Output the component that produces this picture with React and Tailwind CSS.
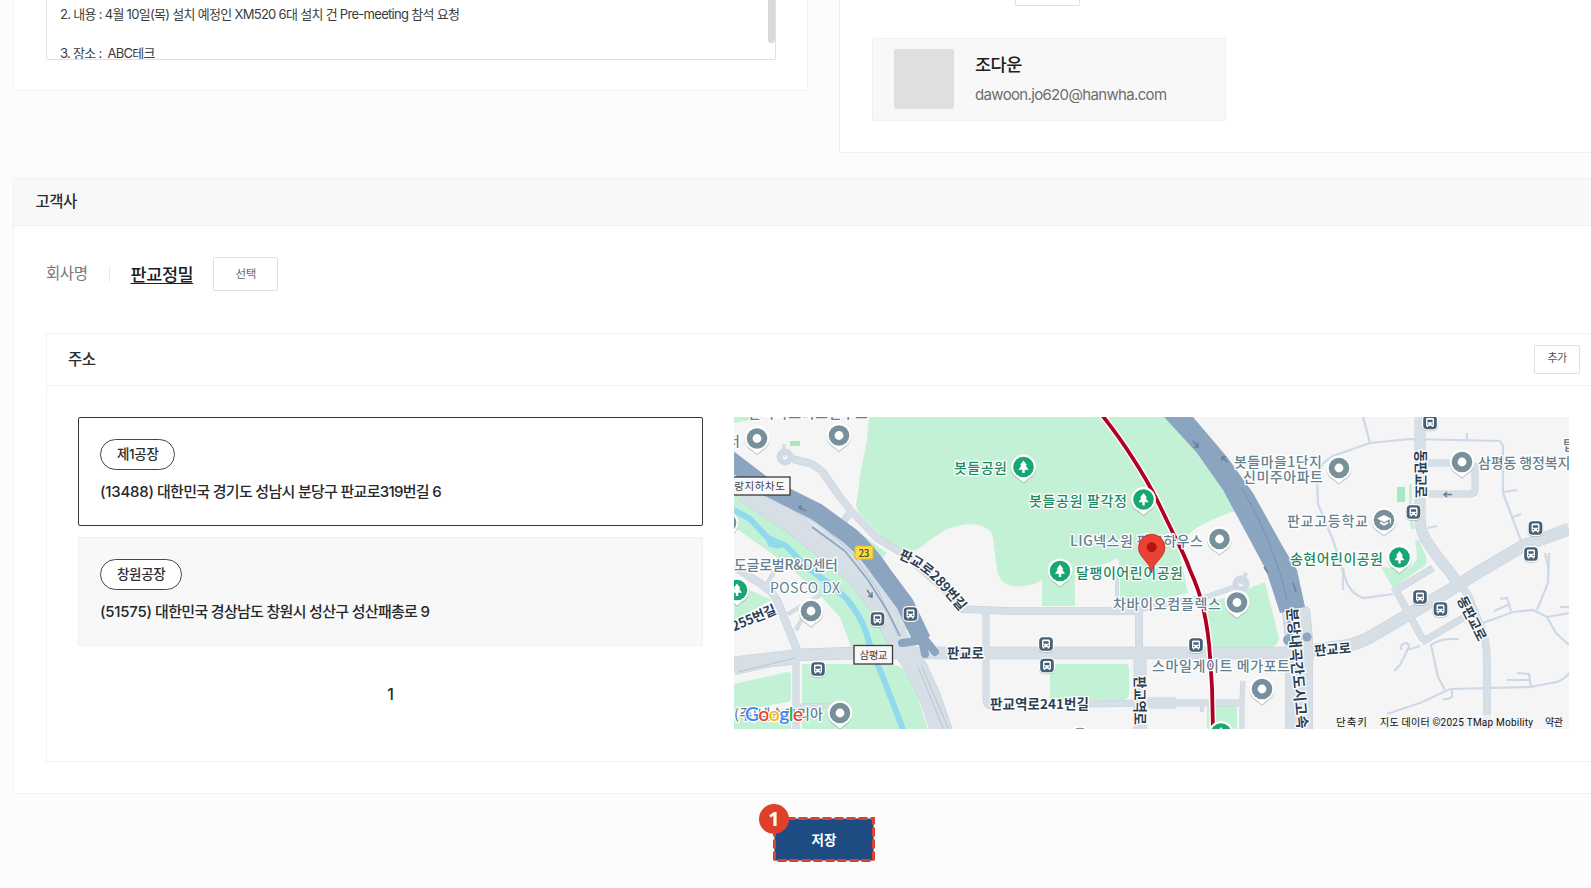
import React from "react";

const PARK = "#1b8a63";
const POI = "#66808f";
const ROAD = "#2c4054";

const thinRoads = [
  "M1363 417L1370 443",
  "M1343 590L1343 572L1333 540L1318 504L1317 477L1323 463L1333 456L1370 443L1410 439L1500 441L1503 446L1503 493L1521 541",
  "M1343 568Q1346 592 1363 598L1393 594",
  "M1467 441V433",
  "M1503 492L1517 490",
  "M1511 518L1521 514",
  "M1428 528L1437 526",
  "M1545 553L1549 570",
  "M1483 623L1513 612L1533 610L1547 617L1569 613",
  "M1547 617L1556 633L1569 645",
  "M1537 610L1548 583L1549 553",
  "M1500 599L1507 598L1511 611",
  "M1494 611L1510 604",
  "M1560 607L1569 607",
  "M1401 650Q1400 643 1407 643Q1411 646 1407 650L1420 646",
  "M1408 649L1400 665L1394 671",
  "M1459 639Q1440 638 1431 645L1438 677L1445 690",
  "M1387 714L1420 703L1450 689L1530 687L1557 682Q1566 678 1569 673",
  "M1507 680H1530",
  "M1517 673L1529 674L1531 687",
  "M1452 690V697Q1448 700 1443 699",
];

const roads = [
  ["M734 566L750 577Q770 588 777 600L797 650", 7],
  ["M766 585L774 572M788 614L820 595M796 630L803 617", 3],
  ["M796 650V730", 6],
  ["M798 706L850 705", 4],
  ["M784 457V444", 2],
  ["M793 459L812 464L822 471L840 497L852 512L877 538L905 555L945 590L962 609L1010 611H1137", 6.5],
  ["M850 512L841 526", 6],
  ["M1137 610L1180 601L1203 598L1238 586", 4.5],
  ["M1241 584L1246 573", 3],
  ["M986 612V698Q986 706 993 706", 6],
  ["M1117 612V572", 3],
  ["M1139 611V655", 7],
  ["M1140 655V730", 12],
  ["M1080 704L1148 703", 6],
  ["M1148 703L1176 703", 10],
  ["M1176 703L1243 703", 6],
  ["M1242 730V700L1243 681", 4],
  ["M1202 704V712", 3],
  ["M1428 463H1452M1475 463V489Q1475 494 1470 494H1428", 6],
  ["M1420 417V520Q1421 532 1426 540Q1436 556 1450 572L1458 584", 10],
  ["M1393 592L1433 568", 6],
  ["M1397 592L1423 640", 6],
  ["M1422 642L1468 615", 6],
  ["M1450 570L1468 595L1484 635Q1487 645 1487 665V730", 6.5],
  ["M734 669L795 655L855 653H1290L1345 646Q1360 643 1372 636L1450 590L1477 573L1523 546L1569 529", 11.5],
  ["M734 664L795 657", 14],
  ["M745 491L790 521L825 548L857 575L880 605L898 640L917 669L930 697L942 732", 21],
  ["M790 500L820 520L855 552L882 590L902 632", 12],
  ["M1305 607Q1311 630 1311 660", 4],
  ["M1296 610L1299 640V732", 27],
];

function Pin({ x, y, green, children }) {
  return (
    <g transform={`translate(${x} ${y})`}>
      <path d="M0 15.6L-5.2 11.2A12.4 12.4 0 1 1 5.2 11.2Z" fill="#8a949b" opacity=".5" transform="translate(0 1.2)" />
      <path d="M0 15.6L-5.2 11.2A12.4 12.4 0 1 1 5.2 11.2Z" fill="#fff" />
      <circle r="10.3" fill={green ? "#18a673" : "#78909c"} />
      {green ? (
        <path d="M0 -6.6L3.6 -1.8H2L5 2.8H1.2V6H-1.2V2.8H-5L-2 -1.8H-3.6Z" fill="#fff" />
      ) : (
        children || <circle r="4.4" fill="#fff" />
      )}
    </g>
  );
}

function Bus({ x, y }) {
  return (
    <g transform={`translate(${x} ${y})`}>
      <rect x="-8" y="-7.2" width="16" height="16" rx="5" fill="#8a949b" opacity=".55" />
      <rect x="-8" y="-8" width="16" height="16" rx="5" fill="#fff" />
      <rect x="-6.8" y="-6.8" width="13.6" height="13.6" rx="3.8" fill="#455f74" />
      <path
        d="M-4 -3.2Q-4 -4.6 -2.6 -4.6H2.6Q4 -4.6 4 -3.2V3.2H3.2V4.6H1.6V3.2H-1.6V4.6H-3.2V3.2H-4ZM-2.6 -2.8V-.2H2.6V-2.8Z"
        fill="#fff"
        fillRule="evenodd"
      />
      <circle cx="-2.2" cy="1.5" r=".8" fill="#455f74" />
      <circle cx="2.2" cy="1.5" r=".8" fill="#455f74" />
    </g>
  );
}

/* Label placed by its left edge and vertical middle, stretched to a known width. */
function Label({ x, y, w, color = POI, size = 14, weight = 500, rotate, children }) {
  return (
    <text
      x={x}
      y={y + size * 0.36}
      textLength={w}
      fontSize={size}
      fontWeight={weight}
      fill={color}
      stroke="#fff"
      strokeWidth="2.6"
      strokeLinejoin="round"
      paintOrder="stroke"
      transform={rotate ? `rotate(${rotate} ${x} ${y})` : undefined}
    >
      {children}
    </text>
  );
}

function BoxLabel({ x, y, w, h, tx, tw, children }) {
  return (
    <g>
      <rect x={x} y={y} width={w} height={h} fill="#f8f7fa" stroke="#3b3b3b" strokeWidth="1.3" />
      <text x={tx} y={y + h / 2 + 3.8} textLength={tw} fontSize="10.5" fill="#444">
        {children}
      </text>
    </g>
  );
}

function MapView() {
  return (
    <svg
      viewBox="734 417 835 312"
      className="block h-[312px] w-[835px] shrink-0 bg-[#f5f5f5] font-['Noto_Sans_CJK_KR',sans-serif]"
    >
      <g fill="#c3f1d5">
        <path d="M869 417L867 440L861 470L856 506L860 514L885 540L900 552Q912 552 920 548Q932 538 945 530Q965 522 978 525Q990 527 993 537L997 570Q1000 584 1012 586Q1030 588 1042 580V606H1075V566L1100 566L1118 558L1120 568V600L1140 605Q1150 602 1188 593L1183 570L1178 548L1190 533Q1200 523 1235 511L1223 490L1197 453L1164 417Z" />
        <path d="M850 524L873 543L887 553L880 560L862 546Z" />
        <path d="M734 484L760 498L800 530L838 558L870 603L890 638V652H853L840 617L817 592L785 563L734 527Z" />
        <path d="M802 664H893L910 672L928 730H802Z" />
        <path d="M734 684L788 672Q791 672 791 675V698Q791 701 788 702L734 712Z" />
        <path d="M734 718L791 708V730H734Z" />
        <path d="M734 583L772 600L734 620Z" />
        <path d="M734 417H765L734 423Z" />
        <path d="M1053 664H1125Q1129 664 1129 669V693Q1129 700 1122 700H1050V667Z" />
        <path d="M1207 706H1234Q1237 706 1237 709V730H1207Z" />
        <path d="M1203 604L1225 598L1265 582L1279 638Q1279 643 1273 647L1213 648Z" />
        <path d="M1415 539L1419 541L1427 558Q1427 566 1420 569L1393 588L1381 567L1407 569Q1418 562 1417 555Z" />
        <path d="M1409 484H1412V512H1409ZM1410 520H1413L1415 529H1411Z" />
      </g>
      <path d="M790 441H800V446H790ZM1397 487H1405V502H1397Z" fill="#a6e8bf" />

      <path
        d="M734 510L750 519L768 538L786 546L808 568L830 584L846 598Q860 615 866 632L872 652L882 675L904 732"
        fill="none"
        stroke="#90daee"
        strokeWidth="6"
      />
      <path d="M764 533L786 545L778 549L768 546Z" fill="#90daee" />

      <g fill="none" stroke="#cdd9e6" strokeWidth="2.2">
        {thinRoads.map((d) => (
          <path key={d} d={d} />
        ))}
      </g>
      <g fill="none" strokeLinejoin="round">
        {roads.map(([d, w]) => (
          <path key={d} d={d} stroke="#c6d1dc" strokeWidth={w + 1} />
        ))}
        {roads.map(([d, w]) => (
          <path key={d} d={d} stroke="#d6dee6" strokeWidth={w} />
        ))}
      </g>
      <circle cx="785" cy="457" r="5.5" fill="none" stroke="#d0dae4" strokeWidth="6" />
      <circle cx="1241" cy="584" r="5.5" fill="none" stroke="#d0dae4" strokeWidth="6" />
      <g fill="none" stroke="#b9c5d2" strokeWidth="1">
        <path d="M780 500L820 524L852 553L878 590L898 636" />
        <path d="M918 667L944 730M922 667L949 730" />
        <path d="M738 672L795 658" />
      </g>
      <path d="M812 527L845 551L868 580L888 612L900 636" fill="none" stroke="#8ba5c1" strokeWidth="1.6" />

      <g fill="none" stroke="#8ba5c1" strokeLinejoin="round">
        <path d="M725 456L763 485L817 512L850 536Q868 552 882 573L905 604L922 640" strokeWidth="18" />
        <path d="M922 636L935 652M924 640L902 643M922 640L925 654" strokeWidth="8" strokeLinecap="round" />
      </g>
      <path
        d="M1164 417H1193L1227 457L1253 493L1283 547L1297 570L1305 607L1280 613L1266 570L1250 540L1223 490L1197 453Z"
        fill="#8ba5c1"
      />
      <path d="M1243 490Q1275 545 1287 600" fill="none" stroke="#7893b2" strokeWidth="1" />
      <circle cx="1307" cy="637" r="4.5" fill="#8ba5c1" />
      <circle cx="1288" cy="640" r="5" fill="#8ba5c1" />
      <path d="M1290 606V640" stroke="#8ba5c1" strokeWidth="5" />

      <g fill="none" stroke="#667f99" strokeWidth="1.4">
        <path d="M806 511L799 507M802 506L799 507L801 510" />
        <path d="M867 590L872 597M868 596L872 597L872 592" />
        <path d="M1193 441L1198 447M1194 447L1198 447L1198 442" />
        <path d="M1227 462L1222 457M1226 457L1222 457L1222 461" />
        <path d="M1452 494.500H1444M1447 492L1444 494.500L1447 497" />
        <path d="M1264 567L1268 573M1296 592L1293 583" />
      </g>

      <g fill="none">
        <path
          d="M1102 415Q1120 438 1132 457Q1147 480 1157 500L1173 533Q1185 556 1190 570Q1199 590 1203 607Q1209 634 1210 657L1212 687L1213 730"
          stroke="#fff"
          strokeWidth="6.500"
        />
        <path
          d="M1102 415Q1120 438 1132 457Q1147 480 1157 500L1173 533Q1185 556 1190 570Q1199 590 1203 607Q1209 634 1210 657L1212 687L1213 730"
          stroke="#b00024"
          strokeWidth="3.800"
        />
      </g>

      <rect x="855" y="546" width="18" height="13" rx="1" fill="#fddc3f" stroke="#e0b92c" />
      <text x="858.500" y="556.500" textLength="11" fontSize="10" fontWeight="500" fill="#4b4a3a">
        23
      </text>

      <Label x={748} y={413} w={120}>한국파스퇴르연구소</Label>
      <Label x={727} y={441} w={13}>터</Label>
      <Label x={734} y={565} w={104}>도글로벌R&amp;D센터</Label>
      <Label x={770} y={588} w={70} weight={400}>POSCO DX</Label>
      <Label x={734} y={714} w={89}>(주)넥슨코리아</Label>
      <Label x={954} y={468} w={53} color={PARK}>봇들공원</Label>
      <Label x={1029} y={501} w={98} color={PARK}>봇들공원 팔각정</Label>
      <Label x={1070} y={540.5} w={133}>LIG넥스원 판교하우스</Label>
      <Label x={1076} y={573} w={107} color={PARK}>달팽이어린이공원</Label>
      <Label x={1113} y={604} w={108}>차바이오컴플렉스</Label>
      <Label x={1152} y={666} w={138}>스마일게이트 메가포트</Label>
      <Label x={1234} y={462} w={88}>봇들마을1단지</Label>
      <Label x={1243} y={476.5} w={80}>신미주아파트</Label>
      <Label x={1478} y={463} w={105}>삼평동 행정복지센</Label>
      <Label x={1563} y={445} w={13}>탑</Label>
      <Label x={1287} y={521} w={81}>판교고등학교</Label>
      <Label x={1290} y={559} w={93} color={PARK}>송현어린이공원</Label>

      <Label x={947} y={653} w={37} size={13.5} weight={700} color={ROAD}>판교로</Label>
      <Label x={1314} y={651} w={37} size={13.5} weight={700} color={ROAD} rotate={-5}>판교로</Label>
      <Label x={990} y={704} w={99} size={13.5} weight={700} color={ROAD}>판교역로241번길</Label>
      <Label x={1140} y={676} w={49} size={13.5} weight={700} color={ROAD} rotate={90}>판교역로</Label>
      <Label x={1421} y={450} w={48} size={13.5} weight={700} color={ROAD} rotate={90}>동판교로</Label>
      <Label x={1461} y={597} w={48} size={13.5} weight={700} color={ROAD} rotate={63}>동판교로</Label>
      <Label x={1292} y={608} w={121} size={14.5} weight={700} color={ROAD} rotate={85}>분당내곡간도시고속</Label>
      <Label x={732} y={627} w={47} size={13.5} weight={700} color={ROAD} rotate={-23}>255번길</Label>
      <path id="road289" d="M898 558Q924 569 939 587L964 616" fill="none" />
      <text
        fontSize="13.500"
        fontWeight="700"
        fill={ROAD}
        stroke="#fff"
        strokeWidth="2.600"
        strokeLinejoin="round"
        paintOrder="stroke"
      >
        <textPath href="#road289" textLength="83">판교로289번길</textPath>
      </text>

      <BoxLabel x={720} y={477} w={70} h={18} tx={724} tw={61}>사랑지하차도</BoxLabel>
      <BoxLabel x={854} y={645.5} w={38.5} h={18.5} tx={859.5} tw={28}>삼평교</BoxLabel>

      <Bus x={877.5} y={619} />
      <Bus x={910.5} y={614} />
      <Bus x={818} y={669} />
      <Bus x={1046} y={644} />
      <Bus x={1047} y={665.5} />
      <Bus x={1196} y={645} />
      <Bus x={1430} y={422.5} />
      <Bus x={1413.5} y={512} />
      <Bus x={1535.5} y={528} />
      <Bus x={1531} y={554} />
      <Bus x={1420} y={597} />
      <Bus x={1440.5} y={609} />

      <Pin x={757} y={438.5} />
      <Pin x={839} y={435.5} />
      <Pin x={726} y={523} />
      <Pin x={811} y={611} />
      <Pin x={840} y={713} />
      <Pin x={1219.5} y={539} />
      <Pin x={1237} y={602.5} />
      <Pin x={1262} y={689} />
      <Pin x={1339} y={468} />
      <Pin x={1462} y={462} />
      <Pin x={1080} y={738} />
      <Pin x={1384} y={520}>
        <path d="M-7 -1.500L0 -5L7 -1.500V3.500H5.800V-.7L0 2.200ZM-4 1.600L0 3.600L4 1.600V3.600L0 5.800L-4 3.600Z" fill="#fff" />
      </Pin>
      <Pin x={1023.5} y={467} green />
      <Pin x={1143.5} y={499.5} green />
      <Pin x={1060} y={571} green />
      <Pin x={737} y={590} green />
      <Pin x={1399.5} y={557.5} green />
      <Pin x={1221} y={733.5} green />

      <path
        d="M1151.700 573C1150.500 562 1138.500 558 1138.500 547.500A13.200 13.200 0 0 1 1164.900 547.500C1164.900 558 1153 562 1151.700 573Z"
        fill="#ea4335"
        stroke="#c5221f"
        strokeWidth=".8"
      />
      <circle cx="1151.700" cy="547.300" r="5" fill="#b31412" />

      <text
        x="745"
        y="721"
        textLength="58"
        fontSize="19.500"
        fontWeight="600"
        stroke="#fff"
        strokeWidth="2.200"
        paintOrder="stroke"
        className="font-['Lato','Open_Sans',sans-serif]"
      >
        <tspan fill="#4285f4">G</tspan>
        <tspan fill="#ea4335">o</tspan>
        <tspan fill="#fbbc04">o</tspan>
        <tspan fill="#4285f4">g</tspan>
        <tspan fill="#34a853">l</tspan>
        <tspan fill="#ea4335">e</tspan>
      </text>

      <rect x="1331" y="715" width="238" height="14" fill="#f5f5f5" opacity=".7" />
      <g fontSize="10" fill="#111" className="font-['Roboto','Noto_Sans_CJK_KR',sans-serif]">
        <text x="1336" y="725.500" textLength="31" fontSize="10.500">단축키</text>
        <text x="1380" y="725.500" textLength="153">지도 데이터 ©2025 TMap Mobility</text>
        <text x="1545" y="725.500" textLength="18">약관</text>
      </g>
    </svg>
  );
}

function AddressCard({ name, zip, address, selected }) {
  return (
    <div
      className={
        selected
          ? "flex h-[109px] flex-col items-start rounded-[2px] border border-[#33363a] bg-white px-[21px] pt-[21px]"
          : "flex h-[109px] flex-col items-start rounded-[2px] border border-[#f0f0f1] bg-[#f8f8f8] px-[21px] pt-[21px]"
      }
    >
      <span className="flex h-[31px] items-center rounded-full border border-[#44474b] bg-white px-4 pb-px text-[13.5px] font-medium tracking-[-0.35px] text-[#2c2e31]">
        {name}
      </span>
      <p className="mt-2.5 text-[15px] leading-6 font-medium tracking-[-0.7px] text-[#26282b]">
        <span className="tracking-[-0.25px]">({zip})</span> {address}
      </p>
    </div>
  );
}

export default function App() {
  return (
    <div className="h-[888px] w-[1591px] overflow-hidden bg-[#fcfcfc] font-['Inter','Noto_Sans_CJK_KR',sans-serif]">
      <div className="flex h-[153px] w-[1700px] items-start pl-[13px]">
        <section className="h-[91px] w-[795px] border border-t-0 border-[#f3f3f4] bg-white pl-8">
          <div className="flex h-[60px] w-[730px] justify-between overflow-hidden rounded-b-[2px] border border-t-0 border-[#dde0e6]">
            <div className="pt-[5px] pl-[13px] text-[13px] leading-[19.5px] tracking-[-0.7px] whitespace-pre text-[#3a3c40]">
              <p>2. 내용 : 4월 10일(목) 설치 예정인 XM520 6대 설치 건 Pre-meeting 참석 요청</p>
              <p>&nbsp;</p>
              <p>3. 장소 :&nbsp; ABC테크</p>
            </div>
            <span className="h-[43px] w-[7px] rounded-b-full bg-[#d9d9d9]" />
          </div>
        </section>

        <section className="ml-[31px] h-[153px] w-[860px] border border-t-0 border-[#f0f0f1] bg-white pl-8">
          <div className="ml-[143px] h-1.5 w-[65px] rounded-b-[2px] border border-t-0 border-[#dde0e6]" />
          <div className="mt-8 flex h-[83px] w-[354px] items-center rounded-[2px] border border-[#f0f0f1] bg-[#f8f8f8] pl-[21px]">
            <span className="mb-px size-[60px] rounded-[2px] bg-[#dedfe1]" />
            <div className="pt-px pl-[21px]">
              <p className="text-[17.5px] leading-7 font-medium tracking-[-0.5px] text-[#1e2023]">조다운</p>
              <p className="mt-0.5 text-[15px] leading-7 tracking-[-0.66px] text-[#6b6d70]">dawoon.jo620@hanwha.com</p>
            </div>
          </div>
        </section>
      </div>

      <section className="mt-[25px] ml-[13px] h-[616px] w-[1700px] border border-[#f2f2f3] bg-white">
        <header className="flex h-[47px] items-center border-b border-[#f0f0f1] bg-[#f8f8f8] pl-[21.5px] text-[15.5px] font-medium tracking-[-0.5px] text-[#2a2c2f]">
          고객사
        </header>

        <div className="mt-[31px] flex h-[34px] items-center pl-8">
          <span className="text-[15.5px] tracking-[-0.4px] text-[#77797c]">회사명</span>
          <span className="ml-[21px] h-4 w-px bg-[#e8e9eb]" />
          <span className="ml-[21px] pt-0.5 text-[17.5px] font-medium tracking-[-0.45px] text-[#1e2023] underline decoration-1 underline-offset-2">
            판교정밀
          </span>
          <span className="ml-5 flex h-[34px] w-[65px] items-center justify-center rounded-[2px] border border-[#dde0e6] pt-px text-[11.5px] tracking-[-0.3px] text-[#66686b]">
            선택
          </span>
        </div>

        <div className="mt-[42px] ml-8 h-[429px] w-[1600px] border border-[#f2f2f3]">
          <header className="flex h-[52px] items-center border-b border-[#f2f2f3] pl-[21px]">
            <h2 className="w-[1466px] text-[15.5px] font-medium tracking-[-0.5px] text-[#2a2c2f]">주소</h2>
            <span className="flex h-[29px] w-[46px] items-center justify-center rounded-[2px] border border-[#dde0e6] pb-0.5 text-[11px] tracking-[-0.5px] text-[#55575a]">
              추가
            </span>
          </header>

          <div className="flex gap-[31px] pt-[31px] pl-[31px]">
            <div className="flex w-[625px] flex-col gap-[11px]">
              <AddressCard name="제1공장" zip="13488" address="대한민국 경기도 성남시 분당구 판교로319번길 6" selected />
              <AddressCard name="창원공장" zip="51575" address="대한민국 경상남도 창원시 성산구 성산패총로 9" />
              <p className="mt-[25px] text-center text-base leading-6 font-medium text-[#2a2c2f]">1</p>
            </div>
            <MapView />
          </div>
        </div>
      </section>

      <div className="mt-[23px] flex pl-[773px]">
        <button className="relative flex h-[45px] w-[102px] items-center justify-center bg-[#1d4b82] pt-px text-[13.5px] font-bold text-white">
          저장
          <svg className="absolute inset-0 size-full">
            <rect x=".75" y=".75" width="100.5" height="43.5" fill="none" stroke="#fcfcfc" strokeWidth="1.500" />
            <rect x="1.500" y="1.500" width="99" height="42" fill="none" stroke="#de402c" strokeWidth="3" strokeDasharray="9 3" />
          </svg>
          <span className="absolute -top-[13px] -left-3.5 flex size-[30px] items-center justify-center rounded-full bg-[#de402c] font-['Open_Sans',sans-serif] text-[20px] font-bold">
            1
          </span>
        </button>
      </div>
    </div>
  );
}
